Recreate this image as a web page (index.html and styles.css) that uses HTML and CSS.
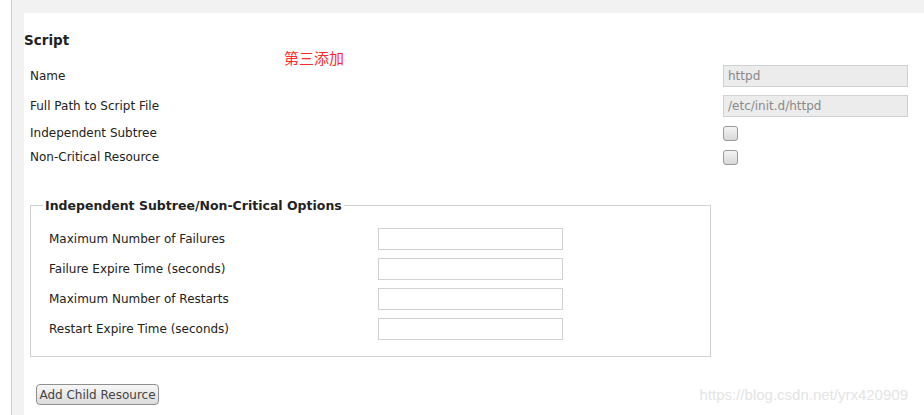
FILE: index.html
```html
<!DOCTYPE html>
<html>
<head>
<meta charset="utf-8">
<link rel="stylesheet" href="styles.css">
</head>
<body>
<div class="page">
  <div class="panel">
    <h2 class="title">Script</h2>
    <span class="note">第三添加</span>
    <div class="form">
      <div class="row tall">
        <span class="label">Name</span>
        <input class="ro" type="text" value="httpd" readonly>
      </div>
      <div class="row tall">
        <span class="label">Full Path to Script File</span>
        <input class="ro" type="text" value="/etc/init.d/httpd" readonly>
      </div>
      <div class="row short">
        <span class="label">Independent Subtree</span>
        <input class="cb" type="checkbox">
      </div>
      <div class="row short">
        <span class="label">Non-Critical Resource</span>
        <input class="cb" type="checkbox">
      </div>
    </div>
    <fieldset class="opts">
      <legend>Independent Subtree/Non-Critical Options</legend>
      <div class="orow"><span class="olabel">Maximum Number of Failures</span><input class="txt" type="text"></div>
      <div class="orow"><span class="olabel">Failure Expire Time (seconds)</span><input class="txt" type="text"></div>
      <div class="orow"><span class="olabel">Maximum Number of Restarts</span><input class="txt" type="text"></div>
      <div class="orow"><span class="olabel">Restart Expire Time (seconds)</span><input class="txt" type="text"></div>
    </fieldset>
    <button class="btn" type="button">Add Child Resource</button>
    <span class="wm">https://blog.csdn.net/yrx420909</span>
  </div>
</div>
</body>
</html>
```

FILE: styles.css
```css
html, body {
  margin: 0;
  padding: 0;
  background: #ffffff;
  height: 100%;
  overflow: hidden;
}
body {
  font-family: "DejaVu Sans", sans-serif;
  font-size: 12px;
  color: #222222;
}
.page {
  margin-left: 11px;
  border-left: 1px solid #cfcfcf;
  background: #f2f2f2;
  padding: 13px 0 0 12px;
  height: 100%;
  box-sizing: border-box;
}
.panel {
  position: relative;
  background: #ffffff;
  height: 100%;
  padding-top: 19px;
  box-sizing: border-box;
}
.title {
  margin: 0;
  font-size: 13.5px;
  font-weight: bold;
  line-height: 17px;
  color: #222222;
}
.note {
  position: absolute;
  left: 260px;
  top: 35px;
  font-family: "Noto Sans CJK SC", sans-serif;
  font-size: 15px;
  line-height: 20px;
  color: #ff2a2a;
}
.form {
  margin-top: 12px;
  padding: 0 16px 0 6px;
}
.row {
  display: flex;
  align-items: center;
  justify-content: space-between;
}
.row.tall { height: 30px; }
.row.short { height: 24px; }
.label { line-height: 15px; padding-top: 1px; }
.ro {
  width: 185px;
  height: 22px;
  box-sizing: border-box;
  border: 1px solid #cfd2d4;
  background: #ececec;
  color: #8a8a8a;
  font-family: "DejaVu Sans", sans-serif;
  font-size: 12px;
  padding: 0 4px;
  margin: 0;
  outline: none;
}
.cb {
  appearance: none;
  -webkit-appearance: none;
  width: 15px;
  height: 15px;
  margin: 0 170px 0 0;
  border: 1px solid #9a9a9a;
  border-radius: 3px;
  background: linear-gradient(#f4f4f4, #d8d8d8);
  box-sizing: border-box;
}
.opts {
  margin: 29px 0 0 6px;
  width: 681px;
  box-sizing: border-box;
  border: 1px solid #cfd2d4;
  padding: 11px 0 12px 18px;
}
.opts legend {
  font-weight: bold;
  font-size: 12.5px;
  padding: 0 2px;
  margin-left: -6px;
  color: #222222;
}
.orow {
  display: flex;
  align-items: center;
  height: 30px;
}
.olabel {
  width: 329px;
}
.txt {
  width: 185px;
  height: 22px;
  box-sizing: border-box;
  border: 1px solid #cfd2d4;
  background: #ffffff;
  margin: 0;
  padding: 0 4px;
  outline: none;
}
.btn {
  display: block;
  margin: 27px 0 0 12px;
  height: 21px;
  width: 123px;
  padding: 0;
  border: 1px solid #8f8f8f;
  border-radius: 4px;
  background: linear-gradient(#f7f7f7, #dcdcdc);
  font-family: "DejaVu Sans", sans-serif;
  font-size: 12px;
  color: #444444;
}
.wm {
  position: absolute;
  right: 16px;
  bottom: 12px;
  font-family: "Liberation Sans", Arial, sans-serif;
  font-size: 15px;
  color: #e4e4e4;
}
```
